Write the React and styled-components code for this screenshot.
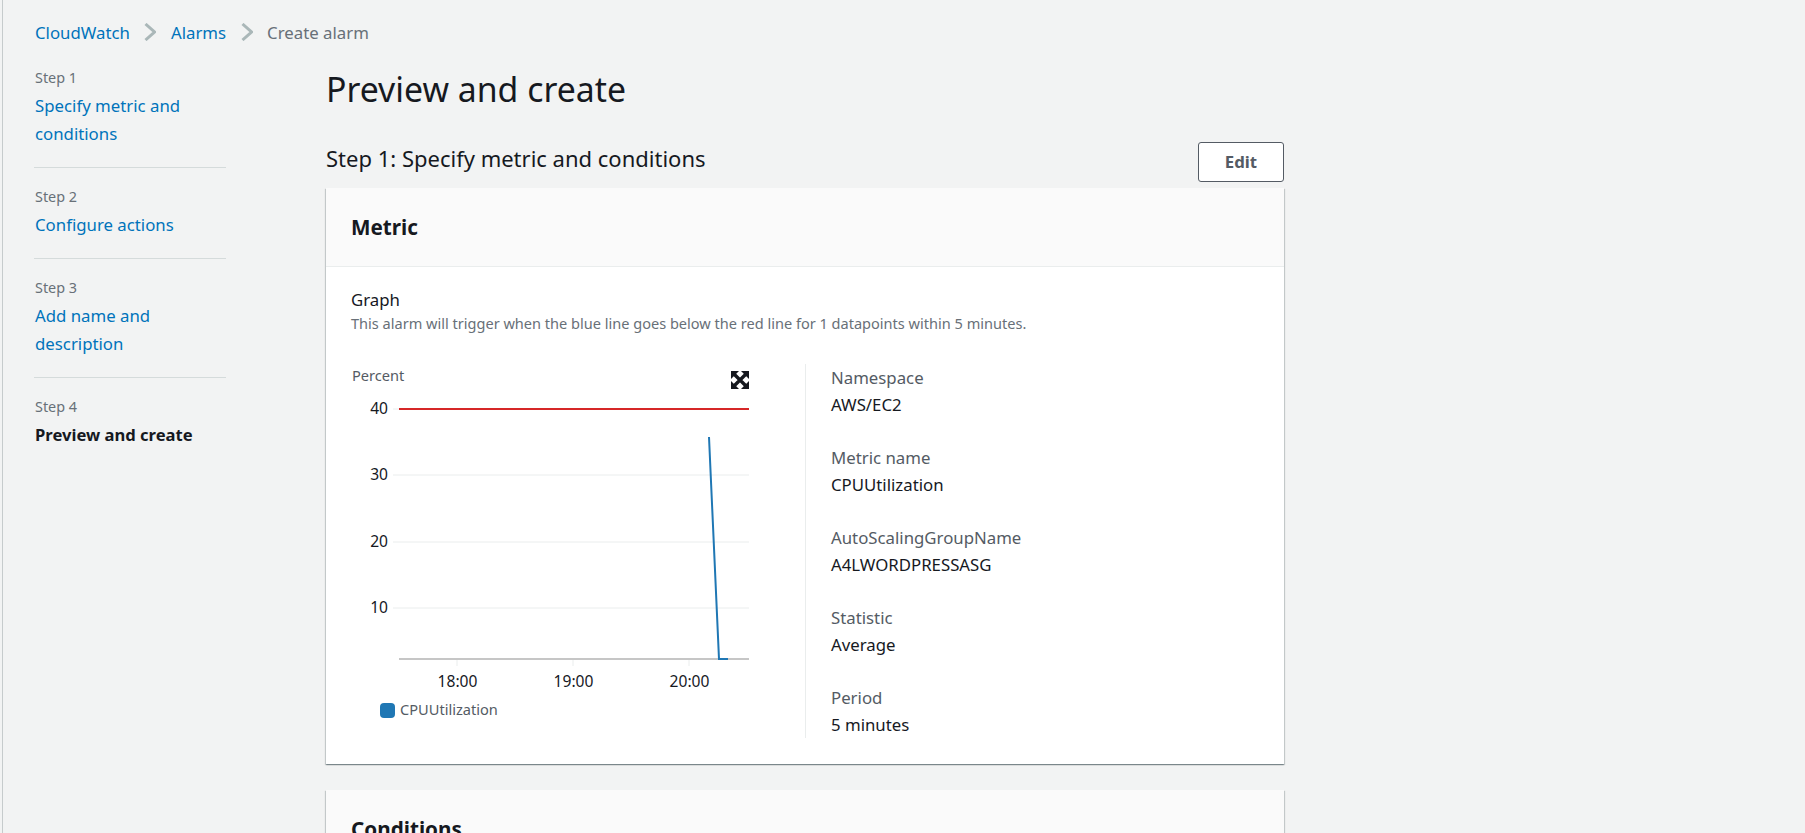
import React from "react";
import styled, { createGlobalStyle } from "styled-components";

const GlobalStyle = createGlobalStyle`
  html, body {
    margin: 0;
    height: 100%;
    overflow: hidden;
    background: #f2f3f3;
    font-family: "Noto Sans", "Open Sans", sans-serif;
    color: #16191f;
  }
`;

const steps = [
  { label: "Step 1", title: ["Specify metric and", "conditions"] },
  { label: "Step 2", title: ["Configure actions"] },
  { label: "Step 3", title: ["Add name and", "description"] },
  { label: "Step 4", title: ["Preview and create"], active: true },
];

const details = [
  ["Namespace", "AWS/EC2"],
  ["Metric name", "CPUUtilization"],
  ["AutoScalingGroupName", "A4LWORDPRESSASG"],
  ["Statistic", "Average"],
  ["Period", "5 minutes"],
];

function Chevron() {
  return (
    <svg width="12" height="18" viewBox="0 0 12 18" fill="none">
      <path d="M1.5 1 L10.5 9 L1.5 17" stroke="#aab7b8" strokeWidth="3" />
    </svg>
  );
}

function ExpandIcon() {
  return (
    <svg x="385" y="11" width="18" height="18" viewBox="0 0 18 18">
      <path d="M0 0H8L0 8Z M18 0V8L10 0Z M0 18V10L8 18Z M18 18H10L18 10Z" fill="#16191f" />
      <path d="M2 2L16 16M16 2L2 16" stroke="#16191f" strokeWidth="3.4" />
    </svg>
  );
}

function Chart() {
  const gridY = [
    { y: 115, label: "30" },
    { y: 182, label: "20" },
    { y: 248, label: "10" },
  ];
  const ticks = [
    { x: 111, label: "18:00" },
    { x: 227, label: "19:00" },
    { x: 343, label: "20:00" },
  ];
  return (
    <ChartSvg width="410" height="376" viewBox="0 0 410 376">
      <ChartText x="6" y="21" fill="#545b64" fontSize="14.6">Percent</ChartText>
      <ExpandIcon />
      <line x1="47" x2="53" y1="49" y2="49" stroke="#eaeded" />
      <ChartText x="42" y="54" textAnchor="end" fontSize="15.6">40</ChartText>
      {gridY.map((g) => (
        <g key={g.label}>
          <line x1="47" x2="403" y1={g.y} y2={g.y} stroke="#eaeded" />
          <ChartText x="42" y={g.y + 5} textAnchor="end" fontSize="15.6">{g.label}</ChartText>
        </g>
      ))}
      <line x1="53" x2="403" y1="49" y2="49" stroke="#d62728" strokeWidth="2" />
      {ticks.map((t) => (
        <g key={t.label}>
          <line x1={t.x} x2={t.x} y1="299" y2="306" stroke="#eaeded" />
          <ChartText x={t.x + 0.5} y="327" textAnchor="middle" fontSize="15.6">{t.label}</ChartText>
        </g>
      ))}
      <line x1="53" x2="403" y1="299" y2="299" stroke="#c6c6c6" strokeWidth="2" />
      <path d="M363 77 L373 299 L382 299" fill="none" stroke="#1f77b4" strokeWidth="2" />
      <rect x="34" y="343" width="15" height="15" rx="4" fill="#1f77b4" />
      <ChartText x="54" y="355" fill="#545b64" fontSize="14.6">CPUUtilization</ChartText>
    </ChartSvg>
  );
}

export default function App() {
  return (
    <Shell>
      <GlobalStyle />
      <Breadcrumbs>
        <Crumb>CloudWatch</Crumb>
        <Chevron />
        <Crumb>Alarms</Crumb>
        <Chevron />
        <Crumb $current>Create alarm</Crumb>
      </Breadcrumbs>
      <Layout>
        <Sidebar>
          {steps.map((step, i) => (
            <StepItem key={step.label} $last={i === steps.length - 1}>
              <StepLabel>{step.label}</StepLabel>
              <StepTitle $active={step.active}>
                {step.title.map((line) => (
                  <div key={line}>{line}</div>
                ))}
              </StepTitle>
            </StepItem>
          ))}
        </Sidebar>
        <Content>
          <PageTitle>Preview and create</PageTitle>
          <SectionRow>
            <SectionTitle>Step 1: Specify metric and conditions</SectionTitle>
            <EditButton>Edit</EditButton>
          </SectionRow>
          <Card>
            <CardHeader>Metric</CardHeader>
            <CardBody>
              <GraphTitle>Graph</GraphTitle>
              <GraphNote>
                This alarm will trigger when the blue line goes below the red line for 1 datapoints within 5 minutes.
              </GraphNote>
              <GraphRow>
                <Chart />
                <DetailList>
                  {details.map(([key, value]) => (
                    <Detail key={key}>
                      <DetailKey>{key}</DetailKey>
                      <DetailValue>{value}</DetailValue>
                    </Detail>
                  ))}
                </DetailList>
              </GraphRow>
            </CardBody>
          </Card>
          <Card>
            <CardHeader>Conditions</CardHeader>
          </Card>
        </Content>
      </Layout>
    </Shell>
  );
}

const Shell = styled.div`
  margin-left: 2px;
  height: 100vh;
  overflow: hidden;
  border-left: 1px solid #c6cbcc;
`;

const Breadcrumbs = styled.nav`
  display: flex;
  align-items: center;
  gap: 14.5px;
  height: 28px;
  padding: 18px 0 0 32px;
`;

const Crumb = styled.span`
  font-size: 16.8px;
  color: ${(p) => (p.$current ? "#687078" : "#0073bb")};
`;

const Layout = styled.div`
  display: flex;
  padding-left: 31px;
`;

const Sidebar = styled.aside`
  width: 192px;
  margin-top: 21px;
  flex-shrink: 0;
`;

const StepItem = styled.div`
  padding-bottom: ${(p) => (p.$last ? "0" : "19px")};
  margin-bottom: 18px;
  border-bottom: ${(p) => (p.$last ? "none" : "1px solid #d5dbdb")};
`;

const StepLabel = styled.div`
  padding-left: 1px;
  font-size: 14.4px;
  line-height: 22px;
  color: #687078;
`;

const StepTitle = styled.div`
  margin-top: 3px;
  padding-left: 1px;
  font-size: ${(p) => (p.$active ? "16.6px" : "16.8px")};
  line-height: 28px;
  color: ${(p) => (p.$active ? "#16191f" : "#0073bb")};
  font-weight: ${(p) => (p.$active ? 700 : 400)};
`;

const Content = styled.main`
  width: 958px;
  margin-left: 100px;
`;

const PageTitle = styled.h1`
  margin: 21px 0 0;
  font-size: 33.8px;
  line-height: 44px;
  font-weight: 400;
`;

const SectionRow = styled.div`
  display: flex;
  justify-content: space-between;
  margin-top: 31px;
  margin-bottom: 6px;
`;

const SectionTitle = styled.h2`
  margin: 0;
  font-size: 22px;
  line-height: 32px;
  font-weight: 400;
`;

const EditButton = styled.button`
  width: 86px;
  height: 40px;
  padding-bottom: 3px;
  background: #fff;
  border: 1px solid #545b64;
  border-radius: 3px;
  color: #545b64;
  font-family: inherit;
  font-size: 16.8px;
  font-weight: 700;
`;

const Card = styled.section`
  margin-bottom: 26px;
  background: #fff;
  box-shadow: 0 1px 1px 0 rgba(0, 28, 36, 0.3), 1px 1px 1px 0 rgba(0, 28, 36, 0.15), -1px 1px 1px 0 rgba(0, 28, 36, 0.15);
`;

const CardHeader = styled.h3`
  margin: 0;
  padding: 0 25px;
  height: 78px;
  line-height: 78px;
  font-size: 20.7px;
  font-weight: 700;
  background: #fafafa;
  border-bottom: 1px solid #eaeded;
`;

const CardBody = styled.div`
  padding: 21px 25px 26px;
`;

const GraphTitle = styled.div`
  font-size: 16.8px;
  line-height: 24px;
`;

const GraphNote = styled.div`
  font-size: 14.55px;
  line-height: 22px;
  color: #687078;
`;

const GraphRow = styled.div`
  display: flex;
  margin-top: 30px;
`;

const ChartSvg = styled.svg`
  display: block;
  margin: -4px 49px 0 -5px;
  flex-shrink: 0;
`;

const ChartText = styled.text`
  font-family: "Noto Sans", "Open Sans", sans-serif;
  fill: ${(p) => p.fill || "#16191f"};
`;

const DetailList = styled.dl`
  margin: 0;
  padding-left: 25px;
  height: 374px;
  border-left: 1px solid #eaeded;
`;

const Detail = styled.div`
  margin-bottom: 25px;
  &:last-child {
    margin-bottom: 0;
  }
`;

const DetailKey = styled.dt`
  font-size: 16.8px;
  line-height: 27px;
  color: #545b64;
`;

const DetailValue = styled.dd`
  margin: 0;
  font-size: 16.8px;
  line-height: 28px;
`;
